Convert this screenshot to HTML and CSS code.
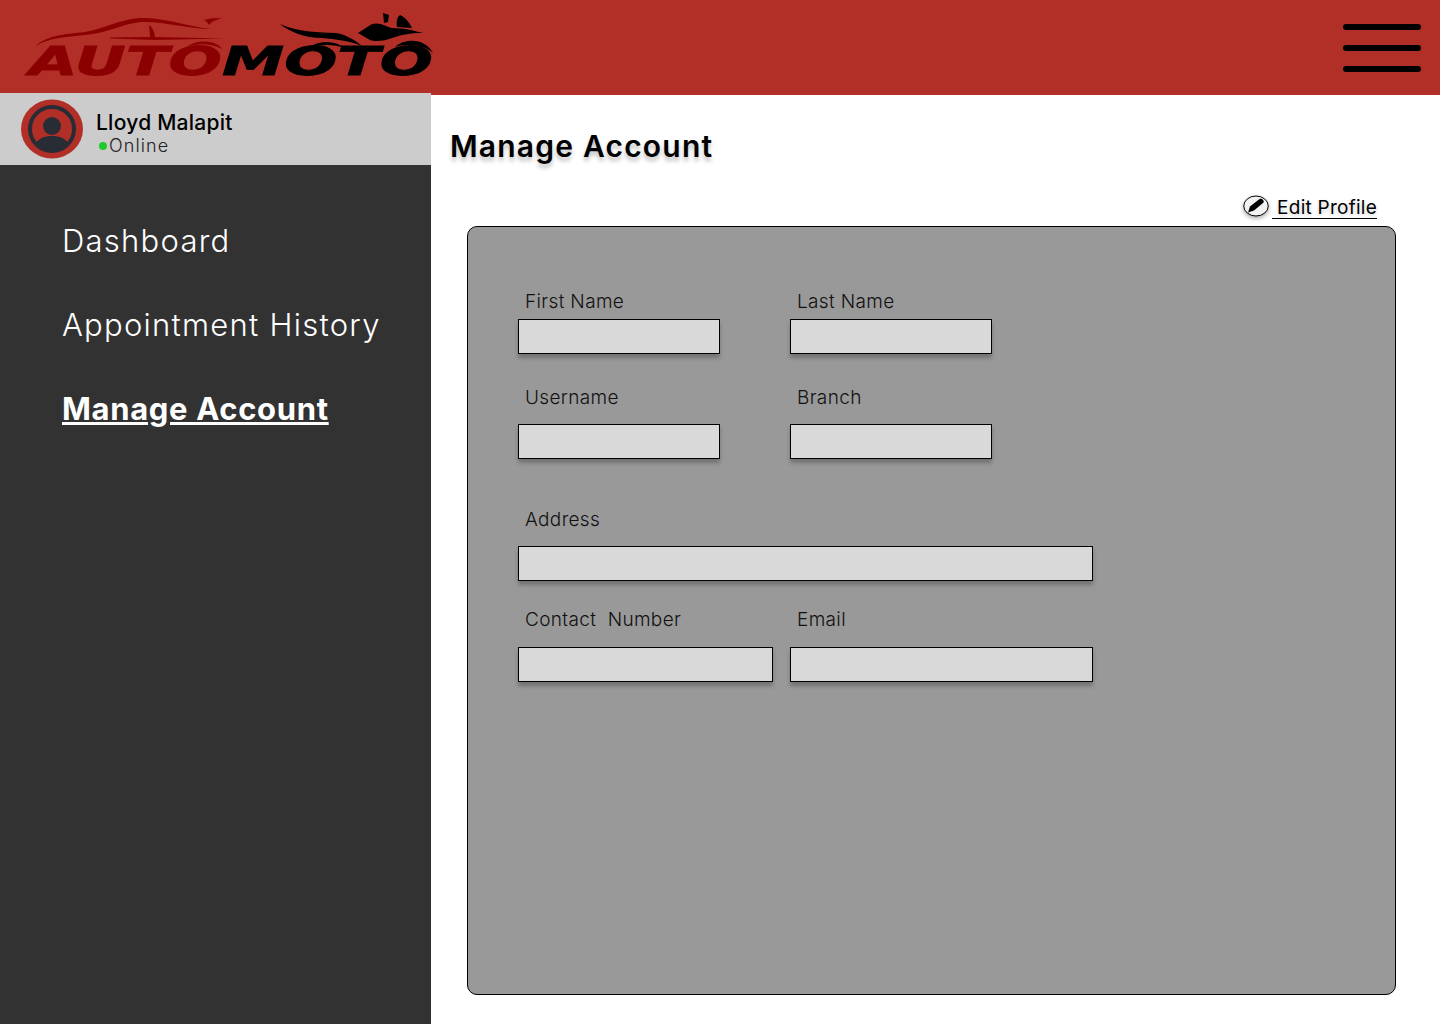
FILE: index.html
```html
<!DOCTYPE html>
<html lang="en">
<head>
    <meta charset="UTF-8">
    <meta name="viewport" content="width=device-width, initial-scale=1.0">
    <title>Manage Account</title>
    <link rel="stylesheet" href="styles.css">
</head>
<body>
    <header class="topbar">
        <svg class="logo" width="440" height="95" viewBox="0 0 440 95">
            <g fill="#8b0000" stroke="none">
                <path d="M36 46C45 36 65 34 85 32C105 29 120 18 145 18C165 18 190 27 212 29C190 29 165 22 145 22C125 22 110 33 85 35C65 37 48 38 36 46Z"/>
                <path d="M204 20C210 18 216 18 222 18.500C216 20 212 21 209 25C208 23 206 21 204 20Z"/>
                <path d="M110 37.500L150 37L149 25C152 27 154 30 155 37L225 38.500L155 40L110 38.500Z"/>
                <path d="M187 47C195 40 215 39 222 49C212 43 197 43 187 47Z"/>
                <text class="logo-text logo-auto" x="29" y="75" textLength="193" lengthAdjust="spacingAndGlyphs">AUTO</text>
            </g>
            <g fill="#000" stroke="none">
                <path d="M280 24C300 33 320 32 335 33C345 34 355 40 362 46C350 41 335 39 322 38C305 38 290 32 280 24Z"/>
                <path d="M358 33L372 24C380 22 385 26 392 28C405 28 415 31 423 33C410 33 400 35 392 38C385 41 375 42 370 40Z"/>
                <path d="M383 13L389 15L388 22L384 23Z"/>
                <path d="M397 27C396 22 397 17 400 15C405 17 409 22 412 28Z"/>
                <path d="M308 48C318 40 335 40 345 48C333 44 320 44 308 48Z"/>
                <path d="M395 47C405 38 425 38 433 53C424 45 408 43 395 47Z"/>
                <text class="logo-text logo-moto" x="222" y="75" textLength="211" lengthAdjust="spacingAndGlyphs">MOTO</text>
            </g>
        </svg>
        <button class="menu-btn" type="button" aria-label="Menu">
            <span></span>
            <span></span>
            <span></span>
        </button>
    </header>

    <div class="layout">
        <aside class="sidebar">
            <div class="profile">
                <svg class="avatar" width="62" height="60" viewBox="0 0 62 60">
                    <ellipse cx="31" cy="30" rx="31" ry="29.500" fill="#b12f27"/>
                    <circle cx="31" cy="30" r="22" fill="none" stroke="#282c34" stroke-width="4"/>
                    <circle cx="31" cy="27" r="9" fill="#282c34"/>
                    <path d="M15 44C19 38 25 37 31 37C37 37 43 38 47 44C43 49 37 51 31 51C25 51 19 49 15 44Z" fill="#282c34"/>
                </svg>
                <div class="profile-text">
                    <div class="profile-name">Lloyd Malapit</div>
                    <div class="profile-status"><span class="status-dot"></span>Online</div>
                </div>
            </div>
            <nav class="side-nav">
                <a href="#">Dashboard</a>
                <a href="#">Appointment History</a>
                <a href="#" class="active">Manage Account</a>
            </nav>
        </aside>

        <main class="content">
            <h1>Manage Account</h1>
            <div class="edit-row">
                <a href="#" class="edit-link">
                    <svg class="edit-icon" width="26" height="22" viewBox="0 0 26 22">
                        <ellipse cx="13" cy="11" rx="12.250" ry="10" fill="#f2f2f2" stroke="#000" stroke-width="1"/>
                        <path d="M5 17.500L7 11.500L16.500 4C18.500 2.800 21.500 5.200 20.500 7.500L11 15.500Z" fill="#000"/>
                    </svg>
                    <span>&nbsp;Edit Profile</span>
                </a>
            </div>
            <form class="card">
                <div class="form-row row-names">
                    <div class="field w-short"><label>First Name</label><input type="text"></div>
                    <div class="field w-short"><label>Last Name</label><input type="text"></div>
                </div>
                <div class="form-row row-user">
                    <div class="field w-short"><label>Username</label><input type="text"></div>
                    <div class="field w-short"><label>Branch</label><input type="text"></div>
                </div>
                <div class="form-row row-address">
                    <div class="field w-full"><label>Address</label><input type="text"></div>
                </div>
                <div class="form-row row-contact">
                    <div class="field w-contact"><label>Contact&nbsp; Number</label><input type="text"></div>
                    <div class="field w-email"><label>Email</label><input type="text"></div>
                </div>
            </form>
        </main>
    </div>
</body>
</html>
```

FILE: styles.css
```css
* {
    box-sizing: border-box;
}
body {
    margin: 0;
    height: 1024px;
    overflow: hidden;
    font-family: Inter, "Noto Sans", sans-serif;
    background-color: #fff;
    color: #000;
}
a {
    color: inherit;
}
.topbar {
    height: 95px;
    background-color: #b12f27;
    display: flex;
    justify-content: space-between;
    align-items: center;
    padding-right: 19px;
}
.logo {
    display: block;
}
.logo-text {
    font-family: "DejaVu Sans", sans-serif;
    font-weight: bold;
    font-style: italic;
    font-size: 39px;
    stroke-width: 0.8px;
}
.logo-auto {
    stroke: #8b0000;
}
.logo-moto {
    stroke: #000;
}
.menu-btn {
    display: flex;
    flex-direction: column;
    gap: 15px;
    width: 78px;
    padding: 0;
    border: none;
    background: none;
}
.menu-btn span {
    display: block;
    height: 6px;
    background-color: #000;
    border-radius: 3px;
}
.layout {
    display: flex;
    height: 929px;
}
.sidebar {
    width: 431px;
    margin-top: -2px;
    background-color: #323232;
    position: relative;
}
.profile {
    height: 72px;
    background-color: #ccc;
    display: flex;
    align-items: center;
    padding-left: 21px;
    gap: 13px;
}
.avatar {
    display: block;
}
.profile-text {
    padding-top: 8px;
}
.profile-name {
    font-size: 21px;
    font-weight: 500;
    line-height: 26px;
    letter-spacing: 0.25px;
}
.profile-status {
    font-size: 18px;
    font-weight: 300;
    line-height: 20px;
    letter-spacing: 1.1px;
    display: flex;
    align-items: center;
    color: #222;
}
.status-dot {
    width: 8px;
    height: 8px;
    margin: 0 2px 0 3px;
    border-radius: 50%;
    background-color: #1ecb2a;
}
.side-nav {
    display: flex;
    flex-direction: column;
    gap: 46px;
    padding: 57px 0 0 62px;
}
.side-nav a {
    color: #fff;
    font-size: 31px;
    font-weight: 300;
    line-height: 38px;
    text-decoration: none;
    letter-spacing: 1.25px;
}
.side-nav a.active {
    font-weight: 700;
    text-decoration: underline;
    letter-spacing: 0.66px;
}
.content {
    flex: 1;
    padding: 31px 44px 0 36px;
}
h1 {
    margin: 0 0 0 -17px;
    font-size: 30px;
    font-weight: 600;
    line-height: 40px;
    letter-spacing: 1.2px;
    text-shadow: 0 4px 4px rgba(0, 0, 0, 0.25);
}
.edit-row {
    display: flex;
    justify-content: flex-end;
    margin-top: 27px;
    padding-right: 19px;
    height: 33px;
}
.edit-link {
    display: flex;
    align-items: center;
    gap: 3px;
    height: 26px;
    font-size: 19px;
    text-decoration: none;
}
.edit-link span {
    border-bottom: 1px solid #000;
    padding-top: 4px;
    line-height: 21px;
    letter-spacing: 0.25px;
    text-shadow: 0 2px 4px rgba(0, 0, 0, 0.2);
}
.edit-icon {
    display: block;
    filter: drop-shadow(0 2px 2px rgba(0, 0, 0, 0.35));
}
.card {
    height: 769px;
    padding: 1px 0 0 50px;
    background-color: #999;
    border: 1px solid #000;
    border-radius: 10px;
}
.form-row {
    display: flex;
}
.row-names {
    margin-top: 62px;
}
.row-user {
    margin-top: 32px;
}
.row-address {
    margin-top: 49px;
}
.row-contact {
    margin-top: 27px;
}
.field {
    display: flex;
    flex-direction: column;
}
.field label {
    padding-left: 7px;
    font-size: 19px;
    font-weight: 300;
    line-height: 24px;
    letter-spacing: 0.35px;
    color: #111;
}
.field input {
    height: 35px;
    padding: 0;
    margin-top: 5px;
    background-color: #d9d9d9;
    border: 1px solid #000;
    border-radius: 0;
    box-shadow: 0 4px 4px rgba(0, 0, 0, 0.25);
}
.row-user input,
.row-address input {
    margin-top: 14px;
}
.row-contact input {
    margin-top: 15px;
}
.w-short {
    width: 272px;
}
.w-short input {
    width: 202px;
}
.w-full,
.w-full input {
    width: 575px;
}
.w-contact {
    width: 272px;
}
.w-contact input {
    width: 255px;
}
.w-email,
.w-email input {
    width: 303px;
}
```
